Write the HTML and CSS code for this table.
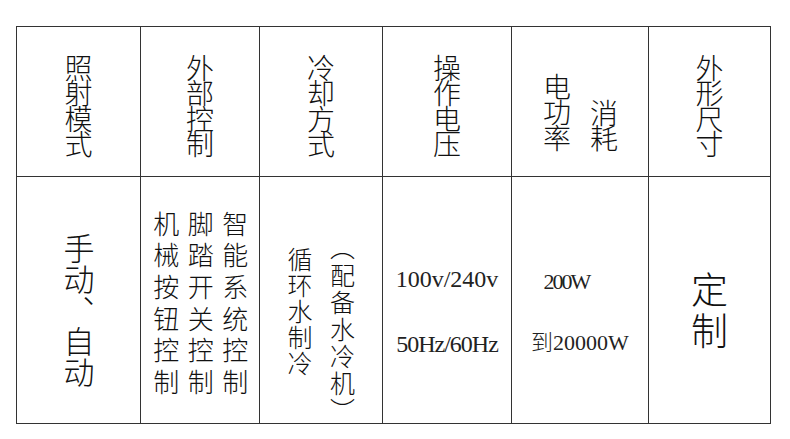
FILE: index.html
```html
<!DOCTYPE html>
<html lang="zh-CN">
<head>
<meta charset="utf-8">
<title>参数表</title>
<link rel="stylesheet" href="styles.css">
</head>
<body>
<div class="sheet">
  <table class="spec">
    <colgroup>
      <col class="c1"><col class="c2"><col class="c3"><col class="c4"><col class="c5"><col class="c6">
    </colgroup>
    <tr class="row-head">
      <th class="h"><div class="vt vt-head">照射模式</div></th>
      <th class="h"><div class="vt vt-head">外部控制</div></th>
      <th class="h"><div class="vt vt-head">冷却方式</div></th>
      <th class="h"><div class="vt vt-head">操作电压</div></th>
      <th class="h h-power"><div class="vt vt-head vt-power">电功率<br>消耗</div></th>
      <th class="h"><div class="vt vt-head">外形尺寸</div></th>
    </tr>
    <tr class="row-body">
      <td class="b b-mode"><div class="vt vt-mode">手动、自动</div></td>
      <td class="b b-ctrl"><div class="vt vt-ctrl">机械按钮控制<br>脚踏开关控制<br>智能系统控制</div></td>
      <td class="b b-cool"><div class="vt vt-cool">循环水制冷<br><span class="cool-note"><span class="paren">（</span>配备水冷机<span class="paren">）</span></span></div></td>
      <td class="b b-volt"><div class="num">100v/240v</div><div class="num num-hz">50Hz/60Hz</div></td>
      <td class="b b-power"><div class="pw pw-first">200W</div><div class="pw">到20000W</div></td>
      <td class="b b-size"><div class="vt vt-size">定制</div></td>
    </tr>
  </table>
</div>
</body>
</html>
```

FILE: styles.css
```css
html, body {
  margin: 0;
  padding: 0;
  background: #ffffff;
}

body {
  width: 790px;
  height: 439px;
  overflow: hidden;
  color: #111111;
  font-family: "Noto Sans CJK SC", "Noto Sans", sans-serif;
}

.sheet {
  padding: 26px 0 0 16px;
}

.spec {
  border-collapse: collapse;
  table-layout: fixed;
  width: 754px;
}

.spec th,
.spec td {
  border: 1px solid #333333;
  padding: 0;
  text-align: center;
  vertical-align: top;
  font-weight: 300;
}

.c1 { width: 124px; }
.c2 { width: 119px; }
.c3 { width: 123px; }
.c4 { width: 129px; }
.c5 { width: 137px; }
.c6 { width: 122px; }

.row-head { height: 150px; }
.row-body { height: 247px; }

.vt {
  display: inline-block;
  writing-mode: vertical-lr;
  text-align: start;
}

/* header */
.spec .h { padding-top: 27px; }
.spec .h-power { padding-top: 46px; }

.vt-head {
  font-size: 28px;
  letter-spacing: -2.5px;
  line-height: 30px;
}

.vt-power {
  text-align: end;
  line-height: 47px;
}

/* body */
.spec .b-mode { padding-top: 56px; }
.vt-mode {
  font-size: 31px;
  letter-spacing: 0px;
  line-height: 32px;
}

.spec .b-ctrl { padding-top: 34px; }
.vt-ctrl {
  font-size: 26px;
  letter-spacing: 5.6px;
  line-height: 34.5px;
}

.spec .b-cool { padding-top: 70px; }
.vt-cool {
  font-size: 25px;
  letter-spacing: 1px;
  line-height: 42.5px;
}
.cool-note {
  letter-spacing: 2px;
}
.paren {
  font-feature-settings: "vhal" 1;
  letter-spacing: 3px;
}

.spec .b-volt { padding-top: 70px; }
.num {
  font-family: "Liberation Serif", "Noto Sans CJK SC", serif;
  font-size: 24px;
  line-height: 65px;
  height: 65px;
  color: #222222;
}
.num-hz { letter-spacing: -1px; }

.spec .b-power { padding-top: 74px; }
.pw {
  font-family: "Liberation Serif", "Noto Sans CJK SC", serif;
  font-size: 22px;
  line-height: 61px;
  height: 61px;
  color: #222222;
}
.pw-first {
  padding-right: 27px;
  letter-spacing: -2px;
}

.spec .b-size { padding-top: 94px; }
.vt-size {
  font-size: 37px;
  letter-spacing: 4px;
  line-height: 40px;
}
```
